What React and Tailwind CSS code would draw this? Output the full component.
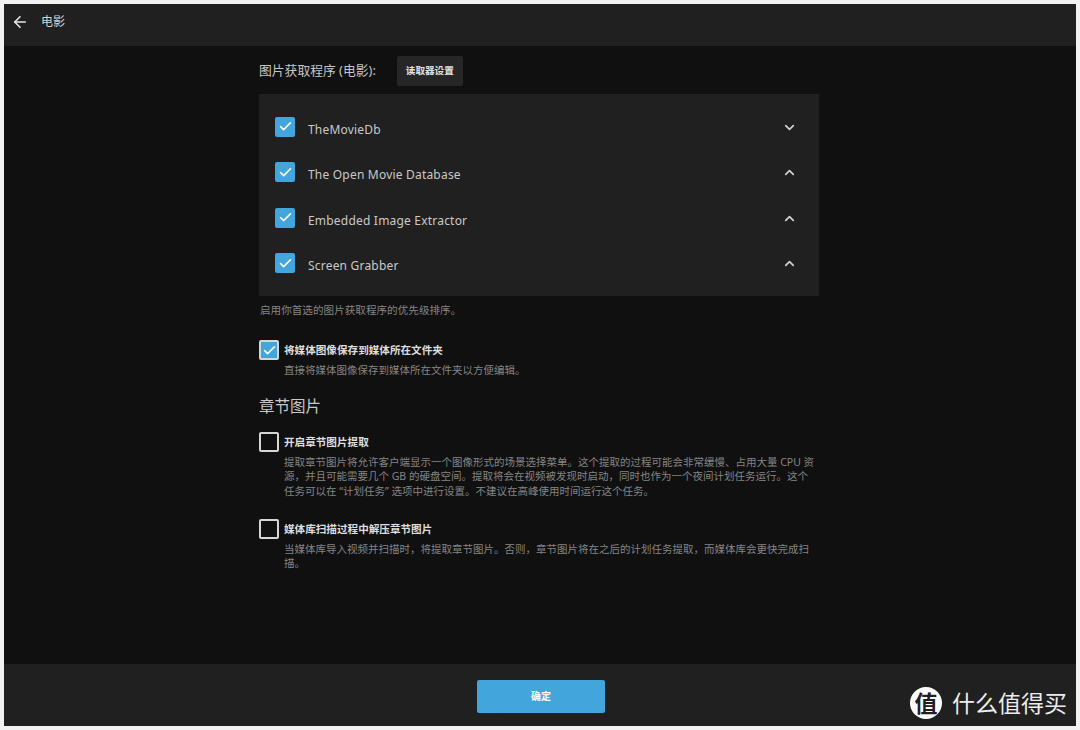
import React from "react";
import { ArrowLeft, Check, ChevronDown, ChevronUp } from "lucide-react";

const fetchers = [
  { name: "TheMovieDb", open: false },
  { name: "The Open Movie Database", open: true },
  { name: "Embedded Image Extractor", open: true },
  { name: "Screen Grabber", open: true },
];

function Box({ checked, solid }) {
  if (solid) {
    return (
      <div className="flex h-5 w-5 shrink-0 items-center justify-center rounded-[2px] bg-[#42a5dc]">
        <Check size={15} strokeWidth={2.6} className="text-white" />
      </div>
    );
  }
  return (
    <div
      className={
        "flex h-5 w-5 shrink-0 items-center justify-center rounded-[2px] border-2 border-[#d6d6d6] " +
        (checked ? "bg-[#42a5dc]" : "bg-transparent")
      }
    >
      {checked && <Check size={15} strokeWidth={2.6} className="text-white" />}
    </div>
  );
}

function Option({ checked, title, children, className }) {
  return (
    <div className={"flex gap-[5px] " + className}>
      <Box checked={checked} />
      <div className="min-w-0 flex-1">
        <div className="mt-[2px] text-[10.6px] leading-[16px] font-bold text-[#dedede]">{title}</div>
        <div className="mt-[5px] text-[10.5px] leading-[14.5px] text-[#858585]">{children}</div>
      </div>
    </div>
  );
}

export default function App() {
  return (
    <div className="h-[730px] w-[1080px] overflow-hidden bg-[#f2f2f2] p-[4px] font-['Noto_Sans','Noto_Sans_CJK_SC',sans-serif]">
      <div className="flex h-[722px] w-[1072px] flex-col bg-[#101010]">
        <header className="flex h-[42px] shrink-0 items-center bg-[#202020] pb-[7px] pl-[7px]">
          <ArrowLeft size={18} strokeWidth={2.2} className="text-[#e6e6e6]" />
          <span className="ml-[12px] text-[12px] text-[#d4d4d4]">电影</span>
        </header>

        <main className="flex-1">
          <div className="ml-[255px] w-[560px]">
            <div className="mt-[10px] flex items-center">
              <span className="text-[12.8px] text-[#c6c6c6]">图片获取程序 (电影):</span>
              <button type="button" className="ml-[21px] h-[30px] w-[66px] rounded-[2px] bg-[#262626] text-[9.6px] font-bold text-[#e2e2e2]">
                读取器设置
              </button>
            </div>

            <div className="mt-[8px] h-[202px] bg-[#202020] pt-[12.6px] pr-[22px] pl-[16px]">
              {fetchers.map((f) => (
                <div key={f.name} className="flex h-[45.5px] items-start">
                  <div className="mt-[10px]">
                    <Box solid />
                  </div>
                  <span className="mt-[14px] ml-[13px] flex-1 text-[12px] leading-[18px] tracking-[0.2px] text-[#c9c9c9]">{f.name}</span>
                  {f.open ? (
                    <ChevronUp size={15} strokeWidth={2.8} className="mt-[13px] text-[#d0d0d0]" />
                  ) : (
                    <ChevronDown size={15} strokeWidth={2.8} className="mt-[13px] text-[#d0d0d0]" />
                  )}
                </div>
              ))}
            </div>

            <div className="mt-[6px] pl-[1px] text-[10.6px] leading-[16px] text-[#858585]">启用你首选的图片获取程序的优先级排序。</div>

            <Option className="mt-[22px]" checked title="将媒体图像保存到媒体所在文件夹">
              直接将媒体图像保存到媒体所在文件夹以方便编辑。
            </Option>

            <h2 className="mt-[17px] text-[15.5px] leading-[22px] font-normal text-[#c9c9c9]">章节图片</h2>

            <Option className="mt-[15px]" title="开启章节图片提取">
              提取章节图片将允许客户端显示一个图像形式的场景选择菜单。这个提取的过程可能会非常缓慢、占用大量 CPU 资源，并且可能需要几个 GB 的硬盘空间。提取将会在视频被发现时启动，同时也作为一个夜间计划任务运行。这个
              <br />
              任务可以在 “计划任务” 选项中进行设置。不建议在高峰使用时间运行这个任务。
            </Option>

            <Option className="mt-[20.5px]" title="媒体库扫描过程中解压章节图片">
              当媒体库导入视频并扫描时，将提取章节图片。否则，章节图片将在之后的计划任务提取，而媒体库会更快完成扫描。
            </Option>
          </div>
        </main>

        <footer className="relative flex h-[62px] shrink-0 items-center justify-center bg-[#202020] pt-[3px] pl-[2px]">
          <button type="button" className="h-[33px] w-[128px] rounded-[2px] bg-[#42a5dc] text-[10px] font-bold text-white">
            确定
          </button>
          <div className="absolute top-[23px] left-[906px] flex items-center">
            <div className="flex h-[32px] w-[32px] items-center justify-center rounded-full bg-white text-[23px] leading-none font-bold text-[#202020]">
              值
            </div>
            <span className="ml-[10px] text-[23px] leading-none text-[#ececec]">什么值得买</span>
          </div>
        </footer>
      </div>
    </div>
  );
}
